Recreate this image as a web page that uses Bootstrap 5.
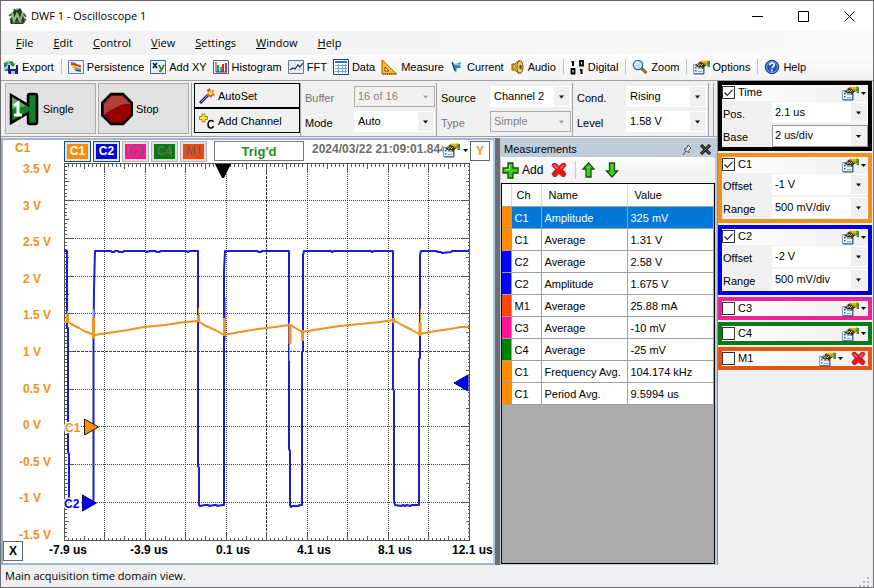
<!DOCTYPE html>
<html lang="en">
<head>
<meta charset="utf-8">
<meta name="viewport" content="width=device-width, initial-scale=1">
<title>DWF 1 - Oscilloscope 1</title>
<link href="https://cdn.jsdelivr.net/npm/bootstrap@5.3.0/dist/css/bootstrap.min.css" rel="stylesheet">
<style>
body{font:11px/14px "Liberation Sans",Arial,sans-serif;color:#000;background:#f0f0f0}
button,select,input{font:inherit;color:inherit}
svg{flex:none;display:block}
.win{min-height:100vh;border:1px solid #707074;border-top-color:#66666a}
.ui{font:11px/16px "Open Sans","Noto Sans",sans-serif}
.titlebar{height:30px;background:#fff;padding:0 1px 0 7px}
.winbtn{width:46px;height:30px;border:0;background:none;padding:0;display:flex;justify-content:center;align-items:center}
.menus{height:24px;padding-left:15px;gap:20px;background:linear-gradient(90deg,#f0f0f0,#fafafa)}
.menus a,.tools button{color:#000;text-decoration:none}
.tools{height:26px;padding:0 0 2px 2px;background:linear-gradient(#fdfdfd,#f3f3f3);border-bottom:1px solid #a0a0a0;gap:6px}
.tools button,.flat{border:0;background:none;padding:0;display:flex;align-items:center;gap:3px;white-space:nowrap}
.tools button.close-set{gap:2px}
.tools i{width:1px;height:15px;background:#bdbdbd;margin:0 0 0 1px}
.side{width:156px;flex:none;padding-right:1px;border-left:1px solid #8d8d8d;gap:2px}
.ctl{height:56px;border-bottom:1px solid #a0a0a0;padding:2px 0 0 4px}
.ctlbtns{gap:2px}
.bigbtn{width:91px;height:51px;border:1px solid #adadad;background:#e1e1e1;padding:0 0 0 3px;display:flex;align-items:center;gap:4px}
.bigbtn.close-set{padding-left:2px;gap:3px}
.vline{width:1px;background:#a0a0a0;align-self:stretch;flex:none}
.blackbtn{width:106px;height:25px;border:1px solid #000;background:#f0f0f0;padding:0 0 0 4px;display:flex;align-items:center;gap:3px}
.pairs{display:grid;grid-template-columns:49px 81px;grid-auto-rows:22px;row-gap:3px;align-items:center;padding:2px 0 0 4px;width:135px}
.pairs label{padding-top:3px}
.combo{appearance:none;border:1px solid #fff;border-radius:0;height:21px;padding:0 18px 1px 3px;width:100%;min-width:0;
 background:url("data:image/svg+xml,%3Csvg xmlns='http://www.w3.org/2000/svg' width='16' height='24'%3E%3Cpath fill='%23f0f0f0' d='M0 0h16v24H0z'/%3E%3Cpath d='M5 11h5L7.500 14z'/%3E%3C/svg%3E") right center no-repeat #fff}
.combo:disabled{opacity:1;color:#838383;border-color:#adadad;background-image:url("data:image/svg+xml,%3Csvg xmlns='http://www.w3.org/2000/svg' width='16' height='24'%3E%3Cpath fill='%23999' d='M5 11h5L7.500 14z'/%3E%3C/svg%3E");background-color:#f0f0f0}
.dim{color:#757575}
.dock{background:#6b6e74;gap:5px;margin-top:1px}
.leftside,.plotbox{min-width:0;min-height:0}
.scope{background:#fff;border:2px solid #a6b4cb;border-right-color:#b4cae4;border-left-color:#a0adc2;min-width:0}
.scopehead{height:22px;padding:1px 3px 0 12px}
.scopehead b,.scopehead button{font-size:12px;font-weight:700}
.orange{color:#ee9220}
.chname{width:49px}
.chan{width:27px;height:21px;border:1px solid #b5b5b5;background:#e1e1e1;padding:2px;margin-right:2px}
.chan span{display:block;line-height:15px;color:#6a6a6a}
.chan.on{border-color:#14507e;background:#dde6ee}.chan.on span{color:#fff}
.f1 span{background:#ff8c00}.f2 span{background:#00d}.f3 span{background:#ff1493}.f4 span{background:#007b0c}.f5 span{background:#ff4500}
.trig{width:90px;height:20px;border:1px solid #777;color:#1f8a22;text-align:center;margin-left:5px;font:bold 13px/19px "Liberation Sans",Arial,sans-serif}
.stamp{color:#6d6d6d;white-space:nowrap;overflow:hidden;width:0;margin-left:8px;line-height:16px}
.optover{right:25px;top:2px}
.optover svg:first-child{background:#fff}
.axbtn{width:20px;height:20px;border:1px solid #666;background:#fff;padding:0;font-size:12px;font-weight:700;line-height:16px}
.axx{left:0;bottom:2px}
.chart{width:100%;height:100%}
.chart text{font:bold 12px "Liberation Sans",Arial,sans-serif}
.meas{width:217px;flex:none;background:#bfcddb;padding:0 2px 1px 1px}
.meashead{height:19px;padding:4px 4px 0 3px}
.meastools{height:26px;background:linear-gradient(#fcfcfc,#f0f0f0);border-radius:0 3px 0 0;padding:0 1px}
.addbtn{font-size:12px}
.list{border:1px solid #000;background:#ababab}
.mt{table-layout:fixed;width:100%;border-collapse:collapse;background:#fff}
.mt td,.mt th{height:22px;padding:1px 0 0 3px;border-right:1px solid #a0a0a0;border-bottom:1px solid #a0a0a0;font-weight:400;white-space:nowrap}
.mt th{border-right-color:#dcdcdc;padding-left:7px}
.mt th:nth-child(2){padding-left:5px}
.mt tr.sel td{background:#0078d7;color:#fff}
.c-strip{width:9px}.c-ch{width:30px}.c-name{width:86px}
.mt td.k1,.mt tr.sel td.k1{background:#ff8c00}.mt td.k2{background:#00f}.mt td.k3{background:#ff1493}.mt td.k4{background:#008000}.mt td.k5{background:#ff4500}
.panel{border:4px solid #000;background:#f0f0f0}
.p1{border-color:#ef9021}.p2{border-color:#0000dc}.p3{border-color:#e92495}.p4{border-color:#0a7a14}.p5{border-color:#e8530f}
.phead{height:16px;padding-right:2px;background:linear-gradient(90deg,#fff,#f0f0f0)}
.phead .flat{gap:2px}
.small-p .phead{height:15px}
.phead label{gap:3px}
.tick{appearance:none;width:13px;height:13px;border:1px solid #333;background:#fff;margin:1px 0 0 0;flex:none}
.tick:checked{background:#fff url("data:image/svg+xml,%3Csvg xmlns='http://www.w3.org/2000/svg' width='11' height='11'%3E%3Cpath d='M1.500 5.500l2.800 2.800L9.500 2.800' fill='none' stroke='%23222' stroke-width='1.200'/%3E%3C/svg%3E")}
.prow{display:grid;grid-template-columns:50px 1fr;height:23px}
.prow label{padding:6px 0 0 1px}
.prow .combo{margin-top:1px;padding-bottom:2px;padding-left:2px}
.prow .boxed{border-color:#999;height:22px}
.status{height:22px;padding:3px 4px 0}
</style>
<script src="https://cdn.jsdelivr.net/npm/bootstrap@5.3.0/dist/js/bootstrap.bundle.min.js"></script>
</head>
<body>
<svg width="0" height="0" class="position-absolute" aria-hidden="true">
 <symbol id="opt" viewBox="0 0 17 16">
  <path d="M.5 5.500h10v9H.5z" fill="#e9f1fa" stroke="#8c98a6"/><path d="M11 6v9H1" fill="none" stroke="#3a5574"/>
  <path d="M2 8h1.500v1.500H2zM2 11h1.500v1.500H2z" fill="#2b62b4"/><path d="M5 9h4.500v1H5zM5 12h4.500v1H5z" fill="#8eaed4"/>
  <path d="M2 7l3-3 3-2h5l1 4-3 2-1 2-2-2-2 1-1-1z" fill="#3a3418"/>
  <path d="M4 5.500l2-1M5 7l3-2M8 7l2-2" stroke="#cfc694"/>
  <path d="M7 3l2-2h6l1 2v3h-4l-2-2z" fill="#d6b81e"/><path d="M9 1.500h5" stroke="#fff08a"/><path d="M11 5h4" stroke="#8e7410"/><path d="M14.500 2H17v6h-2.500z" fill="#4d8a3a"/>
 </symbol>
 <symbol id="redx" viewBox="0 0 16 16"><path d="M2 1.500h3l3 3 3-3h3l1 2-3.500 4 3.500 4-1.500 3h-2.500l-3-3-3 3H2.500L1 11.500l3.500-4L1 3.500z" fill="#e8151c" stroke="#a30a12" stroke-width=".8"/><path d="M3 3l3.500 3.500M13 3L9.500 6.500" stroke="#ff7d80" stroke-width="1.300"/></symbol>
 <symbol id="dn" viewBox="0 0 5 3"><path d="M0 0h5L2.500 3z"/></symbol>
</svg>
<div class="win d-flex flex-column">
 <header class="titlebar ui d-flex align-items-center">
  <svg width="19" height="18" viewBox="0 0 19 18"><path d="M2 15L6 2l3 1 3-2 2 3 3 11-2 2H3z" fill="#2e352d"/><path d="M1 9l3-2M15 6l3 4M2 13l2-2M16 12l2 1" stroke="#465043" stroke-width="2"/><path d="M4 5l2 9 3-7 3 7 3-9" fill="none" stroke="#8cc47c" stroke-width="2"/><path d="M8 2h3M4 15h11" stroke="#6c8066"/></svg>
  <span class="ms-1 flex-grow-1">DWF 1 - Oscilloscope 1</span>
  <button class="winbtn" aria-label="Minimize"><svg width="11" height="11"><path d="M0 5.500h11" stroke="#000"/></svg></button>
  <button class="winbtn" aria-label="Maximize"><svg width="11" height="11"><path d="M.5.5h10v10H.5z" fill="none" stroke="#000"/></svg></button>
  <button class="winbtn" aria-label="Close"><svg width="11" height="11"><path d="M.5.5l10 10M10.500.5l-10 10" stroke="#000"/></svg></button>
 </header>
 <nav class="menus ui d-flex align-items-center"><a href="#"><u>F</u>ile</a><a href="#"><u>E</u>dit</a><a href="#"><u>C</u>ontrol</a><a href="#"><u>V</u>iew</a><a href="#"><u>S</u>ettings</a><a href="#"><u>W</u>indow</a><a href="#"><u>H</u>elp</a></nav>
 <div class="tools d-flex align-items-center">
  <button><svg width="16" height="16" viewBox="0 0 16 16"><path d="M1 3l5-2 3 2v9H1z" fill="#b9dcc8"/><path d="M1 4l4-1-1 4-3 2zM1 12l3-3 2 3z" fill="#2c7d8e"/><path d="M5 6h10v9H6l-1-1z" fill="#1a1f86"/><path d="M7 6h6v4H7z" fill="#e8edff"/><path d="M8 12h4v3H8z" fill="#b8c0d8"/><path d="M5 4c3-3 6-2 6 1l2-1-3 4-3-3 2 0" fill="#258c3c"/></svg>Export</button><i></i>
  <button><svg width="16" height="16" viewBox="0 0 16 16"><path d="M.5 1.500h15v13H.5z" fill="#eef1f6" stroke="#6a7a8e"/><path d="M3 4l5 1 5 1.500v2L8 7 3 6z" fill="#e52a17"/><path d="M3 6l5 1 5 1.500v1.500L8 8.500 3 7.500z" fill="#f5d311"/><path d="M4 8l4 .5 5 1.500v1.500L8 10z" fill="#2cb44b"/><path d="M6 10l7 1.500V13L8 12z" fill="#2743dc"/><path d="M3 3l5 1v1L3 4z" fill="#8b2cb6"/></svg>Persistence</button>
  <button><svg width="16" height="16" viewBox="0 0 16 16"><path d="M.5 1.500h15v13H.5z" fill="#e4f0f6" stroke="#4e6880"/><path d="M3 4l4 5M7 4L3 9" stroke="#15254d" stroke-width="1.600"/><path d="M9 6l2 4M14 6l-3 6H9" fill="none" stroke="#2a6a24" stroke-width="1.600"/></svg>Add XY</button>
  <button><svg width="16" height="16" viewBox="0 0 16 16"><path d="M.5 1.500h15v13H.5z" fill="#f4f6fa" stroke="#536273"/><path d="M4 6h2v7H4z" fill="#2a9c35"/><path d="M7 8h2v5H7z" fill="#24a8c0"/><path d="M9 5h2v8H9z" fill="#e02230"/><path d="M12 4h2v9h-2z" fill="#d42a38"/><path d="M3 3v10h11" fill="none" stroke="#445"/></svg>Histogram</button>
  <button><svg width="16" height="16" viewBox="0 0 16 16"><path d="M.5 1.500h15v13H.5z" fill="#f1f6fb" stroke="#66788c"/><path d="M3 2v12M7 2v12M11 2v12M1 6h14M1 10h14" stroke="#cbd8e6"/><path d="M2 11l3-2 2 1 3-4 2 2 3-4" fill="none" stroke="#23384d" stroke-width="1.200"/></svg>FFT</button>
  <button><svg width="16" height="16" viewBox="0 0 16 16"><path d="M.5.5h15v15H.5z" fill="#fff" stroke="#1e3f7a"/><path d="M2 2h12v2H2z" fill="#2f6fd0"/><path d="M2 6.500h12M2 9.500h12M2 12.500h12M5.500 5v9M9.500 5v9M12.500 5v9" stroke="#7ca2d8"/></svg>Data</button>
  <button><svg width="17" height="16" viewBox="0 0 17 16"><path d="M1 .8L15.500 15H1z" fill="#f6c21c" stroke="#8c5a10"/><path d="M4 8l4 4H4z" fill="#fff" stroke="#9b3a10"/><path d="M2 15h13" stroke="#6c3a10" stroke-dasharray="1 1"/></svg>Measure</button>
  <button><svg width="14" height="16" viewBox="0 0 14 16"><path d="M2 4l4 1 5-2-1 4 1 2-4 0-1 5-2-5z" fill="#3185bd"/><path d="M2 3l3 9" stroke="#1d3c66" stroke-width="1.300"/><path d="M4 5l3 1 3-1" stroke="#a4d6f2" fill="none"/></svg>Current</button>
  <button><svg width="15" height="16" viewBox="0 0 15 16"><path d="M2 5h3l4-3.500v13L5 11H2z" fill="#dca719" stroke="#7d5708"/><path d="M7.500 4v8" stroke="#ffe98a" stroke-width="2"/><ellipse cx="10" cy="8" rx="3" ry="6.300" fill="#f3d670" stroke="#5d4a18"/><ellipse cx="10.500" cy="8" rx="1.300" ry="2.500" fill="#6c4b08"/></svg>Audio</button><i></i>
  <button><svg width="15" height="16" viewBox="0 0 15 16"><path d="M3 2v5M1.500 3H3M11.500 10v5M10 11h1.500" stroke="#000" stroke-width="2"/><path d="M10 2h3v4.500h-3zM1.500 10h3v4.500h-3z" fill="none" stroke="#000" stroke-width="1.800"/></svg>Digital</button><i></i>
  <button><svg width="16" height="16" viewBox="0 0 16 16"><path d="M9 9l5.500 5" stroke="#6a4d22" stroke-width="3"/><path d="M9 9l5 4.500" stroke="#e2a43a"/><circle cx="6" cy="6" r="4.700" fill="#b9e2f8" stroke="#44627d" stroke-width="1.300"/><path d="M3 6c0-2 2-3 3-3" fill="none" stroke="#fff" stroke-width="1.500"/></svg>Zoom</button><i></i>
  <button class="close-set"><svg width="17" height="16"><use href="#opt"/></svg>Options</button><i></i>
  <button><svg width="16" height="16" viewBox="0 0 16 16"><circle cx="8" cy="8" r="6.700" fill="#1d52c8" stroke="#122f86"/><circle cx="8" cy="8" r="5.500" fill="none" stroke="#9cc0f8" stroke-width=".8"/><path d="M5.800 6.300c0-3 4.600-2.800 4.400-.2-.1 1.500-2.200 1.600-2.200 3.200M8 10.500v1.700" fill="none" stroke="#fff" stroke-width="1.700"/></svg>Help</button>
 </div>
 <div class="d-flex flex-grow-1">
  <div class="leftside d-flex flex-column flex-grow-1">
   <div class="ctl d-flex">
    <div class="ctlbtns d-flex">
    <button class="bigbtn"><svg width="30" height="34" viewBox="0 0 30 34"><path d="M2 3l17 10V4q0-2 2-2h5q2 0 2 2v26q0 2-2 2h-5q-2 0-2-2v-9L2 31z" fill="#0b8420" stroke="#000" stroke-width="2.500"/><path d="M3 5l14 9-14 3z" fill="#5faa66"/><path d="M22 4h3v26h-3z" fill="#23753a"/><path d="M5 13.500l4-2.500v12M5 23h8" fill="none" stroke="#fff" stroke-width="3"/></svg>Single</button>
    <button class="bigbtn close-set"><svg width="32" height="34" viewBox="0 0 32 34"><path d="M10 2h12l9 9v12l-9 9H10l-9-9V11z" fill="#960000" stroke="#000" stroke-width="2.500"/><path d="M10.500 4h11l8 8C22 11 12 16 3 23V12z" fill="#b95450" opacity=".75"/></svg>Stop</button>
    <span class="vline"></span>
    <div><button class="blackbtn"><svg width="16" height="16" viewBox="0 0 16 16"><path d="M1 15l8-8" stroke="#151c80" stroke-width="3"/><path d="M2 14l6-6" stroke="#a4b4f5"/><path d="M11 0l1 3 3-1-1 3 2 2-3 1-1 2-2-2-3 0 2-3-1-3z" fill="#f24a16"/><circle cx="11.500" cy="5" r="2.200" fill="#ffe93a"/></svg>AutoSet</button><button class="blackbtn"><svg width="16" height="16" viewBox="0 0 16 16"><path d="M3 1h3v2.500h2.500v3H6V9H3V6.500H.5v-3H3z" fill="#ffe03a" stroke="#927510" stroke-width=".8"/><path d="M14.500 9c-1-2.500-5.500-2-5.500 2.500S13.500 16 14.500 13" fill="none" stroke="#000" stroke-width="1.500"/></svg>Add Channel</button></div>
    </div>
    <span class="vline"></span>
    <div class="pairs"><label class="dim" for="buf">Buffer</label><select id="buf" class="combo" disabled><option>16 of 16</option></select><label for="mode">Mode</label><select id="mode" class="combo"><option>Auto</option></select></div>
    <span class="vline"></span>
    <div class="pairs"><label for="src">Source</label><select id="src" class="combo"><option>Channel 2</option></select><label class="dim" for="typ">Type</label><select id="typ" class="combo" disabled><option>Simple</option></select></div>
    <span class="vline"></span>
    <div class="pairs"><label for="cond">Cond.</label><select id="cond" class="combo"><option>Rising</option></select><label for="lev">Level</label><select id="lev" class="combo"><option>1.58 V</option></select></div>
    <span class="vline"></span><span class="vline ms-1"></span>
   </div>
   <div class="dock d-flex flex-grow-1">
    <main class="scope d-flex flex-column flex-grow-1">
     <div class="scopehead d-flex position-relative">
      <b class="orange chname">C1</b>
      <button class="chan on f1"><span>C1</span></button><button class="chan on f2"><span>C2</span></button><button class="chan f3"><span>C3</span></button><button class="chan f4"><span>C4</span></button><button class="chan f5"><span>M1</span></button>
      <div class="trig">Trig'd</div>
      <b class="stamp flex-grow-1">2024/03/22 21:09:01.844.8</b>
      <button class="flat optover position-absolute" aria-label="View options"><svg width="17" height="16"><use href="#opt"/></svg><svg width="5" height="3"><use href="#dn"/></svg></button>
      <button class="axbtn orange flex-shrink-0">Y</button>
     </div>
     <div class="plotbox flex-grow-1 position-relative">
      <svg id="plot" class="chart" viewBox="3 162 490 401" preserveAspectRatio="xMinYMin meet" role="img" aria-label="Channel 1 and 2 waveforms"></svg>
      <button class="axbtn axx position-absolute">X</button>
     </div>
    </main>
    <aside class="meas d-flex flex-column">
     <div class="meashead d-flex"><span class="flex-grow-1">Measurements</span>
      <button class="flat me-2" aria-label="Pin"><svg width="10" height="12" viewBox="0 0 10 12"><path d="M1 11l3-4" stroke="#444"/><path d="M2 5l3-1 1-3 3 3-2 2 0 3z" fill="#e5e8ec" stroke="#555"/></svg></button>
      <button class="flat" aria-label="Close"><svg width="11" height="11" viewBox="0 0 11 11"><path d="M1 1l9 9M10 1l-9 9" stroke="#222" stroke-width="3.200"/><path d="M1.500 1.500l8 8M9.500 1.500l-8 8" stroke="#707070" stroke-width=".8"/></svg></button></div>
     <div class="meastools d-flex align-items-center">
      <button class="flat addbtn"><svg width="17" height="17" viewBox="0 0 17 17"><path d="M6 1h5v5h5v5h-5v5H6v-5H1V6h5z" fill="#3cc81e" stroke="#17500c" stroke-width="1.300"/><path d="M7.500 3v4.500H3" fill="none" stroke="#a4f07a"/></svg>Add</button>
      <button class="flat ms-2" aria-label="Remove"><svg width="16" height="16"><use href="#redx"/></svg></button>
      <span class="vline ms-2 my-1 opacity-50"></span>
      <button class="flat ms-1" aria-label="Move up"><svg width="17" height="16" viewBox="0 0 17 16"><path d="M8.500 1l5.500 6h-3v8H6V7H3z" fill="#3fd01f" stroke="#174f0c" stroke-width="1.300"/></svg></button>
      <button class="flat ms-2" aria-label="Move down"><svg width="14" height="16" viewBox="0 0 14 16"><path d="M7 15l5.500-6H9.500V1h-5v8h-3z" fill="#3fd01f" stroke="#174f0c" stroke-width="1.300"/></svg></button>
     </div>
     <div class="list flex-grow-1">
      <table class="mt"><colgroup><col class="c-strip"><col class="c-ch"><col class="c-name"><col></colgroup>
       <thead><tr><th class="p-0"></th><th>Ch</th><th>Name</th><th>Value</th></tr></thead>
       <tbody>
        <tr class="sel"><td class="k1"></td><td>C1</td><td>Amplitude</td><td>325 mV</td></tr>
        <tr><td class="k1"></td><td>C1</td><td>Average</td><td>1.31 V</td></tr>
        <tr><td class="k2"></td><td>C2</td><td>Average</td><td>2.58 V</td></tr>
        <tr><td class="k2"></td><td>C2</td><td>Amplitude</td><td>1.675 V</td></tr>
        <tr><td class="k5"></td><td>M1</td><td>Average</td><td>25.88 mA</td></tr>
        <tr><td class="k3"></td><td>C3</td><td>Average</td><td>-10 mV</td></tr>
        <tr><td class="k4"></td><td>C4</td><td>Average</td><td>-25 mV</td></tr>
        <tr><td class="k1"></td><td>C1</td><td>Frequency Avg.</td><td>104.174 kHz</td></tr>
        <tr><td class="k1"></td><td>C1</td><td>Period Avg.</td><td>9.5994 us</td></tr>
       </tbody></table>
     </div>
    </aside>
   </div>
  </div>
  <div class="side d-flex flex-column">
   <section class="panel">
    <div class="phead d-flex justify-content-between"><label class="d-flex"><input type="checkbox" class="tick" checked>Time</label><button class="flat" aria-label="Time options"><svg width="17" height="16"><use href="#opt"/></svg><svg width="5" height="3"><use href="#dn"/></svg></button></div>
    <div class="prow"><label for="pos">Pos.</label><select id="pos" class="combo"><option>2.1 us</option></select></div>
    <div class="prow"><label for="base">Base</label><select id="base" class="combo boxed"><option>2 us/div</option></select></div>
   </section>
   <section class="panel p1">
    <div class="phead d-flex justify-content-between"><label class="d-flex"><input type="checkbox" class="tick" checked>C1</label><button class="flat" aria-label="C1 options"><svg width="17" height="16"><use href="#opt"/></svg><svg width="5" height="3"><use href="#dn"/></svg></button></div>
    <div class="prow"><label for="o1">Offset</label><select id="o1" class="combo"><option>-1 V</option></select></div>
    <div class="prow"><label for="r1">Range</label><select id="r1" class="combo"><option>500 mV/div</option></select></div>
   </section>
   <section class="panel p2">
    <div class="phead d-flex justify-content-between"><label class="d-flex"><input type="checkbox" class="tick" checked>C2</label><button class="flat" aria-label="C2 options"><svg width="17" height="16"><use href="#opt"/></svg><svg width="5" height="3"><use href="#dn"/></svg></button></div>
    <div class="prow"><label for="o2">Offset</label><select id="o2" class="combo"><option>-2 V</option></select></div>
    <div class="prow"><label for="r2">Range</label><select id="r2" class="combo"><option>500 mV/div</option></select></div>
   </section>
   <section class="panel small-p p3"><div class="phead d-flex justify-content-between"><label class="d-flex"><input type="checkbox" class="tick">C3</label><button class="flat" aria-label="C3 options"><svg width="17" height="16"><use href="#opt"/></svg><svg width="5" height="3"><use href="#dn"/></svg></button></div></section>
   <section class="panel small-p p4"><div class="phead d-flex justify-content-between"><label class="d-flex"><input type="checkbox" class="tick">C4</label><button class="flat" aria-label="C4 options"><svg width="17" height="16"><use href="#opt"/></svg><svg width="5" height="3"><use href="#dn"/></svg></button></div></section>
   <section class="panel small-p p5"><div class="phead d-flex"><label class="d-flex flex-grow-1"><input type="checkbox" class="tick">M1</label><button class="flat me-2" aria-label="M1 options"><svg width="17" height="16"><use href="#opt"/></svg><svg width="5" height="3"><use href="#dn"/></svg></button><button class="flat" aria-label="Remove M1"><svg width="15" height="15"><use href="#redx"/></svg></button></div></section>
  </div>
 </div>
 <footer class="status ui d-flex justify-content-between">Main acquisition time domain view.<svg width="10" height="10" class="align-self-end"><path d="M8 0h2v2H8zM4 4h2v2H4zM8 4h2v2H8zM0 8h2v2H0zM4 8h2v2H4zM8 8h2v2H8z" fill="#bbb"/></svg></footer>
</div>
<script>
const L=64.5,R=469.5,T=163.5,B=540.5,dx=(R-L)/10,dy=(B-T)/10,r=v=>Math.floor(v)+.5;
let g='',t='';
for(let i=1;i<10;i++){
  const x=r(L-.5+i*dx),y=r(T-.5+i*dy),d=i===5?'3 1':'1 1';
  g+=`<path d="M${x} 164V540M65 ${y}H469" stroke-dasharray="${d}"/>`;
}
for(let i=0;i<=100;i++){
  const x=r(L-.5+i*dx/10),y=r(T-.5+i*dy/10),a=i%10===0?8:i%5===0?5:3,b=i%10===0?8:i%5===0?4:2;
  t+=`M${x} ${T}v${a}M${x} ${B}v-${a}M${L} ${y}h${b}M${R} ${y}h-${b}`;
}
let s=`<g stroke="#444" fill="none" shape-rendering="crispEdges">${g}<path stroke="#555" d="${t}"/><path stroke="#555" d="M${L} ${T}H${R}V${B}H${L}z"/></g>`;
s+=`<path fill="none" stroke="#1c1cd0" stroke-width="2" stroke-linejoin="round" d="M64 251H67V327L68 328V452L69 454V503M93.500 503V335L94 290L95 251H111l1 1h2l1-1h3l1 1h4l1-1h3H145l2 1 3-1h5l2 1h2l2-1H186l2 1 2-1H198V466L199 468V505l1 1 5-1h3l2 1 4-1h2l2 1 4-1H224V271L225 251H257l2 1h2l1-1H289V449L290 451V505l1 2 1-1h6l2-1H302V352L303 351V255l1-4H331l1 1 2-1H371l1 1 2-1H393V389L394 391V500l1 5 6 1 2-1 2 1 2-1 3 1 2-1H419V359L420 358V255l1-4H436l2 1h3l1 1 9-1 1-1H469"/>`;
s+=`<path fill="none" stroke="#ee9220" stroke-width="2" stroke-linejoin="round" d="M64 322H68L71 324L79 328L84 331L94 335L108 333L128 330L144 327L165 325L185 322L198 321L204 325L215 330L224 335L240 332L258 329L275 327L289 325L292 326L302 332L320 329L340 326L360 324L380 322L393 320L402 325L412 330L419 334L436 331L450 329L461 327H469"/>`;
s+=`<path fill="none" stroke="#ee9220" stroke-width="3" d="M67.500 314v9M93.500 318v20M198.500 315v7M224.500 318v18M290 324v20M302.500 330v11M393.500 318v5M420 322v14"/><path fill="none" stroke="#ee9220" d="M67.500 311v5M93.500 309v30M198.500 308v6M225.500 297v44M289.500 322v39M420.500 309v14"/>`;
s+=`<path d="M215 164h16l-7 14h-2z"/><path d="M454 383l14-8v16z" fill="#00f" stroke="#001060"/><path d="M84.500 419v16l14-8z" fill="#ff8c00" stroke="#221100"/><path d="M82.500 495v16l14-8z" fill="#00f" stroke="#001060"/>`;
s+=`<g paint-order="stroke" stroke="#fff" stroke-width="3"><text x="65" y="432" fill="#ee9220">C1</text><text x="64" y="508" fill="#00d">C2</text></g>`;
['3.5 V','3 V','2.5 V','2 V','1.5 V','1 V','0.5 V','0 V','-0.5 V','-1 V','-1.5 V'].forEach((v,i)=>s+=`<text x="${i>7?19:23}" y="${Math.round(173+i*36.6)}" fill="#ee9220">${v}</text>`);
[[49,'-7.9 us'],[130,'-3.9 us'],[216,'0.1 us'],[297,'4.1 us'],[378,'8.1 us'],[452,'12.1 us']].forEach(([x,v])=>s+=`<text x="${x}" y="554">${v}</text>`);
document.getElementById('plot').innerHTML=s;
</script>
</body>
</html>
